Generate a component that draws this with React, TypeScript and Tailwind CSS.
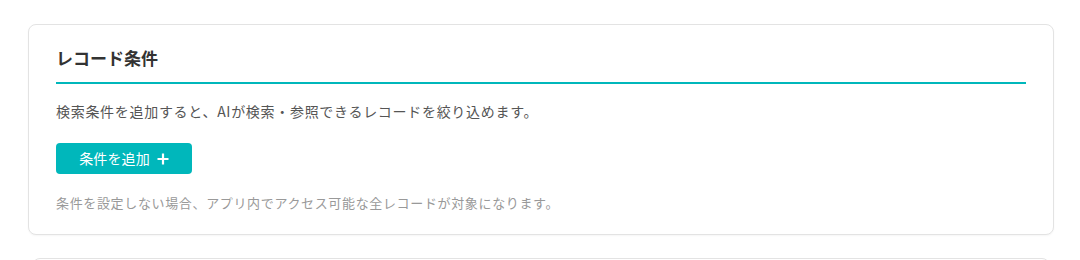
import React from 'react';

const PlusIcon: React.FC = () => (
  <svg width="12" height="12" viewBox="0 0 12 12" className="shrink-0">
    <path d="M6 0.5v11M0.5 6h11" stroke="currentColor" strokeWidth="2.2" />
  </svg>
);

const App: React.FC = () => {
  return (
    <div
      className="min-h-screen bg-white px-[28px] pt-[24px] pr-[26px]"
      style={{ fontFamily: '"Noto Sans CJK JP", "Noto Sans", sans-serif' }}
    >
      {/* Record conditions card */}
      <section className="bg-white border border-[#e3e3e3] rounded-lg shadow-[0_1px_2px_rgba(0,0,0,0.04)] px-[27px] pt-[20px] pb-[21px]">
        <h2 className="text-[17px] leading-[26px] font-bold text-[#333] pb-[11px] border-b-2 border-[#00b7bb]">
          レコード条件
        </h2>
        <p className="mt-4 text-[14px] leading-[22px] text-[#555] tracking-[0.05em]">
          検索条件を追加すると、AIが検索・参照できるレコードを絞り込めます。
        </p>
        <button className="mt-[21px] h-[31px] w-[136px] flex items-center justify-center gap-[7px] bg-[#00b7bb] hover:bg-[#00a5a9] text-white text-[14px] rounded-[4px]">
          <span className="tracking-[0.01em]">条件を追加</span>
          <PlusIcon />
        </button>
        <p className="mt-[19px] text-[13px] leading-[20px] text-[#999] tracking-[0.05em]">
          条件を設定しない場合、アプリ内でアクセス可能な全レコードが対象になります。
        </p>
      </section>

      {/* Next card (cut off) */}
      <section className="mt-[23px] mx-1 h-[120px] bg-white border border-[#e3e3e3] rounded-lg" />
    </div>
  );
};

export default App;
